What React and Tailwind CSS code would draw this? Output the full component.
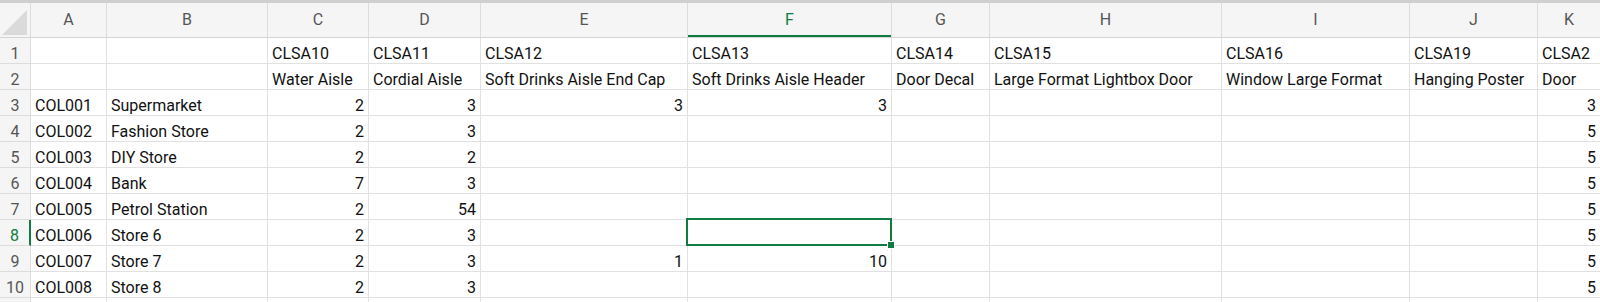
import React from "react";

const columns = ["A", "B", "C", "D", "E", "F", "G", "H", "I", "J", "K"];

// row 1 codes and row 2 descriptions start at column C
const codes = ["CLSA10", "CLSA11", "CLSA12", "CLSA13", "CLSA14", "CLSA15", "CLSA16", "CLSA19", "CLSA2"];
const names = [
  "Water Aisle",
  "Cordial Aisle",
  "Soft Drinks Aisle End Cap",
  "Soft Drinks Aisle Header",
  "Door Decal",
  "Large Format Lightbox Door",
  "Window Large Format",
  "Hanging Poster",
  "Door",
];

const stores = [
  ["COL001", "Supermarket", 2, 3, 3, 3, "", "", "", "", 3],
  ["COL002", "Fashion Store", 2, 3, "", "", "", "", "", "", 5],
  ["COL003", "DIY Store", 2, 2, "", "", "", "", "", "", 5],
  ["COL004", "Bank", 7, 3, "", "", "", "", "", "", 5],
  ["COL005", "Petrol Station", 2, 54, "", "", "", "", "", "", 5],
  ["COL006", "Store 6", 2, 3, "", "", "", "", "", "", 5],
  ["COL007", "Store 7", 2, 3, 1, 10, "", "", "", "", 5],
  ["COL008", "Store 8", 2, 3, "", "", "", "", "", "", 5],
];

const rows = [
  ["", "", ...codes],
  ["", "", ...names],
  ...stores,
];

const gridCols =
  "grid grid-cols-[31px_76px_161px_101px_112px_207px_204px_98px_232px_188px_128px_1fr]";

const Cell = ({ value, selected, last }) => {
  const isNum = typeof value === "number";
  return (
    <div
      className={`relative h-[26px] border-b border-[#e1e1e1] ${last ? "" : "border-r"} pt-[7px] leading-[18px] whitespace-nowrap ${
        isNum ? "text-right pr-[4px]" : "text-left pl-[4px]"
      } ${selected ? "z-10" : ""}`}
    >
      {value}
      {selected && (
        <>
          <div className="absolute -left-[2px] -top-[2px] -right-[1px] -bottom-[1px] border-2 border-[#107c41] pointer-events-none" />
          <div className="absolute -right-[4px] -bottom-[4px] w-[8px] h-[8px] bg-[#107c41] border border-white" />
        </>
      )}
    </div>
  );
};

export default function App() {
  return (
    <div
      className="w-[1600px] h-[302px] overflow-hidden bg-white text-[16px] text-[#111]"
      style={{ fontFamily: 'Roboto, "Liberation Sans", Arial, sans-serif' }}
    >
      <div className="h-[3px] bg-[#cfcfcf]" />

      {/* column letters */}
      <div className={`${gridCols} h-[35px] bg-[#f5f5f5] border-b border-[#d4d4d4] text-[#555]`}>
        <div className="border-r border-[#dcdcdc] flex items-end justify-end pb-[2px] pr-[3px]">
          <svg width="25" height="25" viewBox="0 0 25 25">
            <polygon points="25,0 25,25 0,25" fill="#dadada" />
          </svg>
        </div>
        {columns.map((c, i) => (
          <div
            key={c}
            className={`flex items-center justify-center ${i < columns.length - 1 ? "border-r border-[#dcdcdc]" : ""} ${
              c === "F" ? "text-[#107c41] shadow-[inset_0_-2px_0_#107c41]" : ""
            }`}
          >
            {c}
          </div>
        ))}
      </div>

      {rows.map((row, r) => (
        <div key={r} className={gridCols}>
          <div
            className={`h-[26px] bg-[#f5f5f5] border-b border-[#dcdcdc] pt-[7px] leading-[18px] text-center ${
              r === 7 ? "text-[#107c41] border-r-2 border-r-[#107c41]" : "border-r text-[#555]"
            }`}
          >
            {r + 1}
          </div>
          {row.map((v, c) => (
            <Cell key={c} value={v} selected={r === 7 && c === 5} last={c === row.length - 1} />
          ))}
        </div>
      ))}

      {/* top edge of the next row */}
      <div className={gridCols}>
        <div className="h-[26px] bg-[#f5f5f5] border-r border-[#dcdcdc]" />
        {columns.map((c, i) => (
          <div key={c} className={`h-[26px] ${i < columns.length - 1 ? "border-r border-[#e1e1e1]" : ""}`} />
        ))}
      </div>
    </div>
  );
}
